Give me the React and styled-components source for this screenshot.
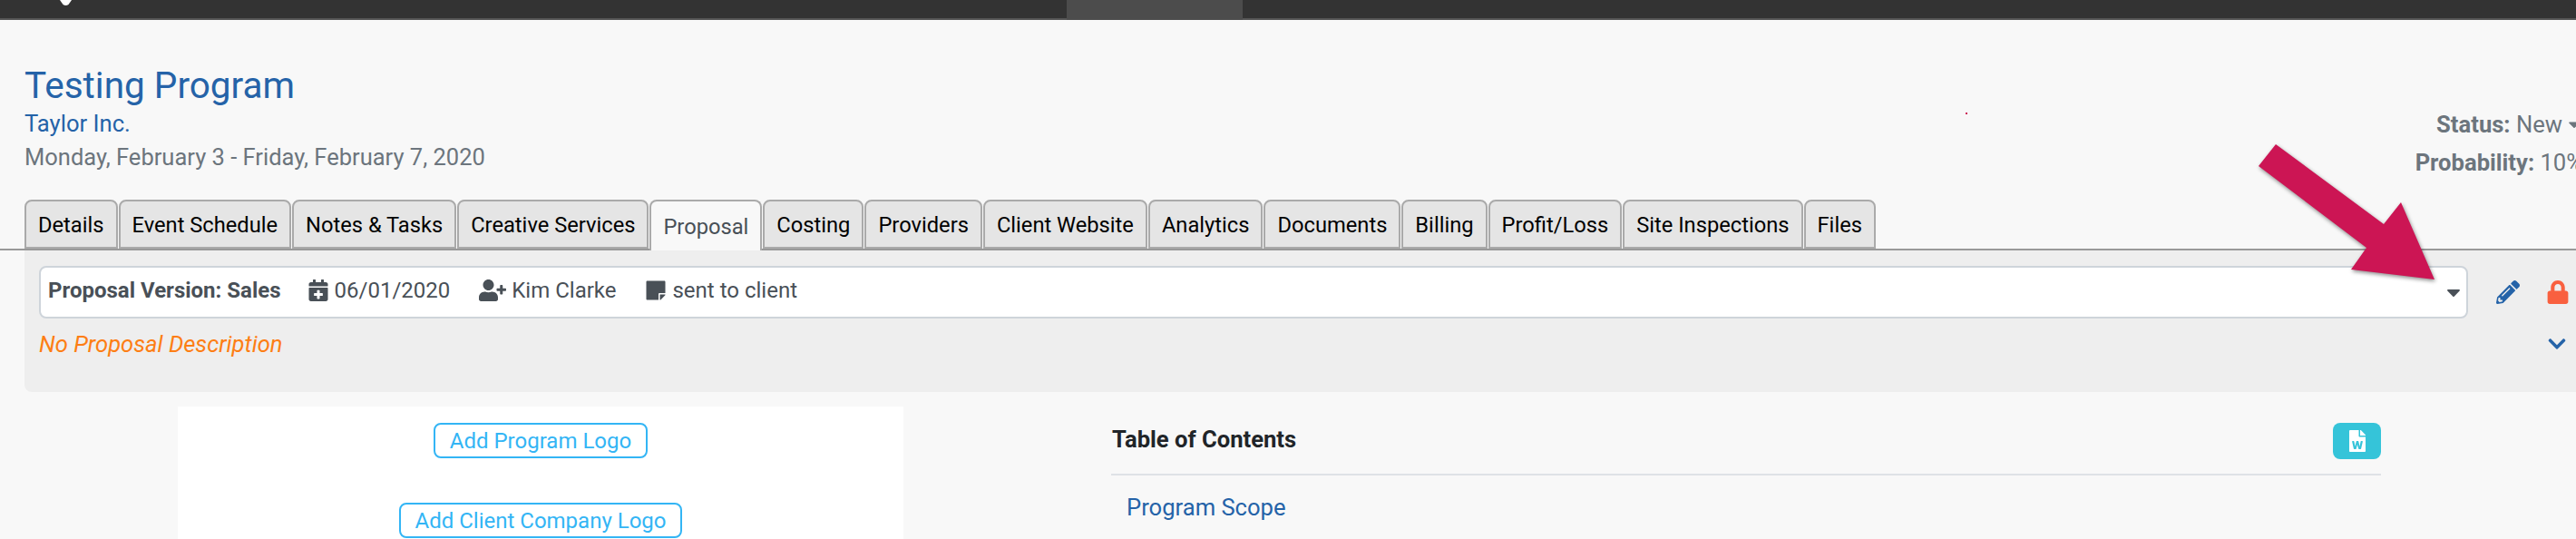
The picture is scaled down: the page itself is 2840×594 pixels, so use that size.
import React from "react";
import styled, { createGlobalStyle } from "styled-components";
import {
  FaCalendarPlus,
  FaUserPlus,
  FaStickyNote,
  FaPencilAlt,
  FaLock,
  FaChevronDown,
  FaCaretDown,
  FaFileWord,
} from "react-icons/fa";

const GlobalStyle = createGlobalStyle`
  html, body {
    margin: 0;
    padding: 0;
    background: #f8f8f8;
  }
  body {
    font-family: Roboto, "Liberation Sans", sans-serif;
    overflow: hidden;
  }
`;

const Page = styled.div`
  position: relative;
  width: 2840px;
  height: 594px;
  overflow: hidden;
  background: #f8f8f8;
`;

const TopBar = styled.div`
  display: flex;
  height: 20px;
  background: #333333;
  border-bottom: 2px solid #555555;
`;

const LogoTip = styled.svg`
  margin-left: 66px;
  width: 13px;
  height: 6px;
`;

const NavActive = styled.div`
  margin-left: 1097px;
  width: 194px;
  height: 22px;
  background: #4c4c4c;
`;

const Header = styled.div`
  display: flex;
  justify-content: space-between;
  height: 198px;
  box-sizing: border-box;
  padding: 49px 0 0 27px;
`;

const Title = styled.h1`
  margin: 0;
  font-size: 40.5px;
  line-height: 47px;
  font-weight: 400;
  color: #2563a8;
`;

const Client = styled.div`
  font-size: 25.6px;
  line-height: 30px;
  margin-top: 3px;
  color: #2563a8;
`;

const Dates = styled.div`
  font-size: 25.5px;
  line-height: 30px;
  margin-top: 7px;
  color: #6c757d;
`;

const StatusBlock = styled.div`
  display: flex;
  flex-direction: column;
  align-items: flex-end;
  gap: 12px;
  margin-top: 51px;
  margin-right: -8px;
  font-size: 25.6px;
  line-height: 30px;
  color: #6c757d;
  b {
    font-weight: 700;
  }
`;

const StatusRow = styled.div`
  display: flex;
  align-items: center;
  gap: 3px;
  white-space: nowrap;
`;

const Tabs = styled.div`
  display: flex;
  gap: 1px;
  height: 56px;
  box-sizing: border-box;
  padding-left: 27px;
  border-bottom: 2px solid #999999;
`;

const Tab = styled.div`
  box-sizing: border-box;
  height: ${(p) => (p.$active ? "56px" : "54px")};
  padding: 2px 13px 0;
  display: flex;
  align-items: center;
  font-size: 23.7px;
  white-space: nowrap;
  color: ${(p) => (p.$active ? "#495057" : "#000000")};
  background: ${(p) => (p.$active ? "#f8f8f8" : "#e5e5e5")};
  border: 2px solid #aaaaaa;
  border-bottom: ${(p) => (p.$active ? "none" : "2px solid #aaaaaa")};
  border-radius: 8px 8px 0 0;
`;

const Panel = styled.div`
  margin-left: 27px;
  height: 156px;
  box-sizing: border-box;
  padding: 17px 0 0 16px;
  background: #eeeeee;
  border-radius: 0 0 0 8px;
`;

const VersionRow = styled.div`
  display: flex;
  align-items: center;
`;

const VersionSelect = styled.div`
  width: 2678px;
  height: 58px;
  box-sizing: border-box;
  display: flex;
  align-items: center;
  padding: 0 2px 5px 8px;
  background: #ffffff;
  border: 2px solid #ced4da;
  border-radius: 8px;
  font-size: 24px;
  color: #495057;
`;

const VersionName = styled.b`
  font-weight: 700;
  margin-right: 29px;
`;

const Meta = styled.span`
  display: inline-flex;
  align-items: center;
  gap: 6px;
  margin-right: 32px;
  svg {
    font-size: 24px;
  }
`;

const UserIcon = styled(FaUserPlus)`
  width: 30px;
  height: 24px;
`;

const SelectCaret = styled(FaCaretDown)`
  margin-left: auto;
  margin-top: 5px;
  font-size: 24px;
  color: #495057;
`;

const IconButton = styled.span`
  display: flex;
  font-size: 26px;
  margin-left: ${(p) => p.$gap}px;
  color: ${(p) => p.$color};
`;

const DescriptionRow = styled.div`
  display: flex;
  justify-content: space-between;
  align-items: center;
  margin-top: 13px;
`;

const NoDescription = styled.em`
  font-size: 25.6px;
  line-height: 30px;
  color: #fd7e14;
`;

const Chevron = styled(FaChevronDown)`
  font-size: 22px;
  margin-right: 10px;
  color: #2563a8;
`;

const Body = styled.div`
  display: grid;
  grid-template-columns: 800px 1400px;
  column-gap: 229px;
  margin: 16px 0 0 196px;
`;

const LogoCard = styled.div`
  height: 146px;
  box-sizing: border-box;
  padding-top: 18px;
  display: flex;
  flex-direction: column;
  align-items: center;
  gap: 49px;
  background: #ffffff;
`;

const LogoButton = styled.div`
  height: 39px;
  box-sizing: border-box;
  padding: 0 16px;
  display: flex;
  align-items: center;
  font-size: 24px;
  white-space: nowrap;
  color: #33b5f5;
  background: #ffffff;
  border: 2px solid #33b5f5;
  border-radius: 8px;
`;

const Contents = styled.div`
  padding-top: 18px;
`;

const ContentsHead = styled.div`
  display: flex;
  justify-content: space-between;
  align-items: center;
  padding-bottom: 16px;
  border-bottom: 2px solid #dee2e6;
`;

const ContentsTitle = styled.b`
  font-size: 25.6px;
  line-height: 30px;
  font-weight: 700;
  color: #212529;
  margin-bottom: 4px;
  margin-left: 1px;
`;

const WordButton = styled.div`
  width: 53px;
  height: 40px;
  display: flex;
  align-items: center;
  justify-content: center;
  font-size: 24px;
  color: #ffffff;
  background: #35c4d9;
  border-radius: 8px;
`;

const ContentsLink = styled.div`
  margin: 21px 0 0 17px;
  font-size: 25.6px;
  line-height: 28px;
  color: #2563a8;
`;

const Speck = styled.div`
  position: absolute;
  left: 2167px;
  top: 124px;
  width: 2px;
  height: 2px;
  background: #cc1554;
`;

const Arrow = styled.svg`
  position: absolute;
  left: 0;
  top: 0;
  pointer-events: none;
  filter: drop-shadow(1px 2px 2px rgba(0, 0, 0, 0.45));
`;

const tabs = [
  "Details",
  "Event Schedule",
  "Notes & Tasks",
  "Creative Services",
  "Proposal",
  "Costing",
  "Providers",
  "Client Website",
  "Analytics",
  "Documents",
  "Billing",
  "Profit/Loss",
  "Site Inspections",
  "Files",
];

export default function App() {
  return (
    <Page>
      <GlobalStyle />
      <TopBar>
        <LogoTip viewBox="0 0 13 6">
          <path d="M0 0H13L9.5 5Q6.5 7 3.5 5Z" fill="#ffffff" />
        </LogoTip>
        <NavActive />
      </TopBar>

      <Header>
        <div>
          <Title>Testing Program</Title>
          <Client>Taylor Inc.</Client>
          <Dates>Monday, February 3 - Friday, February 7, 2020</Dates>
        </div>
        <StatusBlock>
          <StatusRow>
            <span>
              <b>Status:</b> New
            </span>
            <FaCaretDown size={20} />
          </StatusRow>
          <StatusRow>
            <span>
              <b>Probability:</b> 10%
            </span>
          </StatusRow>
        </StatusBlock>
      </Header>

      <Tabs>
        {tabs.map((label) => (
          <Tab key={label} $active={label === "Proposal"}>
            {label}
          </Tab>
        ))}
      </Tabs>

      <Panel>
        <VersionRow>
          <VersionSelect>
            <VersionName>Proposal Version: Sales</VersionName>
            <Meta>
              <FaCalendarPlus />
              06/01/2020
            </Meta>
            <Meta>
              <UserIcon />
              Kim Clarke
            </Meta>
            <Meta>
              <FaStickyNote />
              sent to client
            </Meta>
            <SelectCaret />
          </VersionSelect>
          <IconButton $gap={31} $color="#2563a8">
            <FaPencilAlt />
          </IconButton>
          <IconButton $gap={29} $color="#f9603f">
            <FaLock />
          </IconButton>
        </VersionRow>
        <DescriptionRow>
          <NoDescription>No Proposal Description</NoDescription>
          <Chevron />
        </DescriptionRow>
      </Panel>

      <Body>
        <LogoCard>
          <LogoButton>Add Program Logo</LogoButton>
          <LogoButton>Add Client Company Logo</LogoButton>
        </LogoCard>
        <Contents>
          <ContentsHead>
            <ContentsTitle>Table of Contents</ContentsTitle>
            <WordButton>
              <FaFileWord />
            </WordButton>
          </ContentsHead>
          <ContentsLink>Program Scope</ContentsLink>
        </Contents>
      </Body>

      <Speck />
      <Arrow width="2840" height="594" viewBox="0 0 2840 594">
        <polygon
          points="2509,159 2490,183 2609,273 2592,297 2684,308 2647,223 2628,247"
          fill="#cc1554"
        />
      </Arrow>
    </Page>
  );
}
